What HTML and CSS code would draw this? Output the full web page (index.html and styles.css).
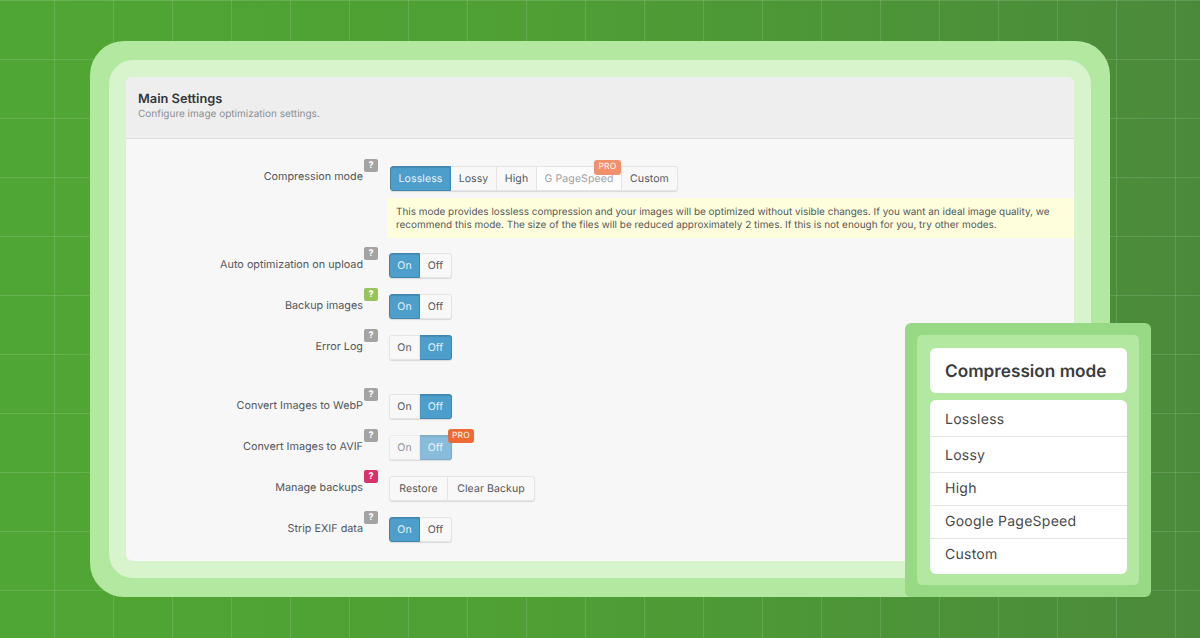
FILE: index.html
```html
<!DOCTYPE html>
<html lang="en">
  <head>
    <meta charset="UTF-8" />
    <meta name="viewport" content="width=device-width, initial-scale=1.0" />
    <title>Main Settings</title>
    <link rel="stylesheet" href="styles.css">
  </head>
  <body>
    <div class="frame-outer">
      <div class="frame-mid">
        <div class="panel">
          <div class="panel-head">
            <h1>Main Settings</h1>
            <p>Configure image optimization settings.</p>
          </div>
          <div class="panel-body">
            <div class="row row-mode">
              <div class="label"><span>Compression mode</span><i class="help">?</i></div>
              <div class="btn-group">
                <span class="btn btn-lossless active">Lossless</span>
                <span class="btn btn-lossy">Lossy</span>
                <span class="btn btn-high">High</span>
                <span class="btn btn-speed disabled">G PageSpeed<b class="pro pro-soft">PRO</b></span>
                <span class="btn btn-custom">Custom</span>
              </div>
            </div>
            <div class="note">This mode provides lossless compression and your images will be optimized without visible changes. If you want an ideal image quality, we recommend this mode. The size of the files will be reduced approximately 2 times. If this is not enough for you, try other modes.</div>

            <div class="row">
              <div class="label"><span>Auto optimization on upload</span><i class="help">?</i></div>
              <div class="btn-group">
                <span class="btn btn-toggle active">On</span>
                <span class="btn btn-toggle">Off</span>
              </div>
            </div>
            <div class="row">
              <div class="label"><span>Backup images</span><i class="help help-green">?</i></div>
              <div class="btn-group">
                <span class="btn btn-toggle active">On</span>
                <span class="btn btn-toggle">Off</span>
              </div>
            </div>
            <div class="row row-spaced">
              <div class="label"><span>Error Log</span><i class="help">?</i></div>
              <div class="btn-group">
                <span class="btn btn-toggle">On</span>
                <span class="btn btn-toggle active">Off</span>
              </div>
            </div>
            <div class="row">
              <div class="label"><span>Convert Images to WebP</span><i class="help">?</i></div>
              <div class="btn-group">
                <span class="btn btn-toggle">On</span>
                <span class="btn btn-toggle active">Off</span>
              </div>
            </div>
            <div class="row">
              <div class="label"><span>Convert Images to AVIF</span><i class="help">?</i></div>
              <div class="btn-group faded">
                <span class="btn btn-toggle">On</span>
                <span class="btn btn-toggle active">Off</span>
                <b class="pro pro-strong">PRO</b>
              </div>
            </div>
            <div class="row">
              <div class="label"><span>Manage backups</span><i class="help help-pink">?</i></div>
              <div class="btn-group">
                <span class="btn btn-restore">Restore</span>
                <span class="btn btn-clear">Clear Backup</span>
              </div>
            </div>
            <div class="row">
              <div class="label"><span>Strip EXIF data</span><i class="help">?</i></div>
              <div class="btn-group">
                <span class="btn btn-toggle active">On</span>
                <span class="btn btn-toggle">Off</span>
              </div>
            </div>
          </div>
        </div>
      </div>
    </div>

    <div class="card">
      <div class="card-inner">
        <div class="card-title">Compression mode</div>
        <ul class="card-list">
          <li class="item-first">Lossless</li>
          <li>Lossy</li>
          <li>High</li>
          <li>Google PageSpeed</li>
          <li>Custom</li>
        </ul>
      </div>
    </div>
  </body>
</html>
```

FILE: styles.css
```css
html,
body {
  height: 638px;
}

body {
  margin: 0;
  overflow: hidden;
  position: relative;
  font-family: Inter, "Liberation Sans", sans-serif;
  text-rendering: geometricPrecision;
  background-color: #4f9e35;
  background-image:
    linear-gradient(90deg, transparent 58px, rgba(255, 255, 255, 0.12) 58px),
    linear-gradient(180deg, transparent 58px, rgba(255, 255, 255, 0.12) 58px),
    linear-gradient(90deg, #50a634 0, #4f9f35 45%, #4b8a3b 100%);
  background-size: 59px 59px, 59px 59px, 100% 100%;
  background-position: -4px 0, 0 1px, 0 0;
}

/* nested frames */
.frame-outer {
  position: absolute;
  left: 90px;
  top: 41px;
  width: 1020px;
  height: 556px;
  box-sizing: border-box;
  padding: 19px;
  background-color: #b2e8a0;
  border-radius: 34px;
}

.frame-mid {
  height: 100%;
  box-sizing: border-box;
  padding: 17px;
  background-color: #d7f4cd;
  border-radius: 24px;
}

.panel {
  height: 100%;
  background-color: #f7f7f7;
  border-radius: 7px;
  overflow: hidden;
}

.panel-head {
  height: 62px;
  box-sizing: border-box;
  padding: 15px 12px 0;
  background-color: #eeeeee;
  border-bottom: 1px solid #dedede;
}

.panel-head h1 {
  margin: 0;
  font-size: 12.8px;
  line-height: 15px;
  font-weight: 600;
  color: #33363b;
}

.panel-head p {
  margin: 0;
  font-size: 10px;
  line-height: 14px;
  color: #8c8e91;
}

.panel-body {
  padding-top: 27px;
}

/* setting rows */
.row {
  display: flex;
  height: 25px;
  margin-bottom: 16px;
}

.row-mode {
  margin-bottom: 7px;
}

.row-spaced {
  margin-bottom: 34px;
}

.label {
  width: 252px;
  flex: none;
  display: flex;
  justify-content: flex-end;
  align-items: flex-start;
  font-size: 10.8px;
  line-height: 23px;
  color: #55585c;
}

.row-mode .label {
  line-height: 21px;
}

.help {
  width: 14px;
  height: 13px;
  margin: -6px 0 0 1px;
  flex: none;
  border-radius: 2px;
  background-color: #a3a3a3;
  color: #fff;
  font-style: normal;
  font-weight: 700;
  font-size: 9px;
  line-height: 13px;
  text-align: center;
}

.row-mode .help {
  margin-top: -7px;
}

.help-green {
  background-color: #99c45c;
}

.help-pink {
  background-color: #d9316a;
}

/* buttons */
.btn-group {
  position: relative;
  display: flex;
  height: 25px;
  margin-left: 11px;
  border-radius: 3px;
  box-shadow: 0 1px 1px rgba(0, 0, 0, 0.12);
}

.row-mode .btn-group {
  margin-left: 12px;
}

.btn {
  position: relative;
  box-sizing: border-box;
  height: 25px;
  background-color: #f8f8f8;
  border: 1px solid #e4e4e4;
  border-left-width: 0;
  font-size: 10.5px;
  line-height: 24px;
  letter-spacing: 0.1px;
  text-align: center;
  color: #55585c;
}

.btn:first-child {
  border-left-width: 1px;
  border-radius: 3px 0 0 3px;
}

.btn:last-of-type {
  border-radius: 0 3px 3px 0;
}

.btn.active {
  background-color: #4d9ecb;
  border-color: #3f86b0;
  color: #e6f3fb;
  box-shadow: inset 0 1px 1px rgba(0, 0, 0, 0.12);
}

.btn.disabled {
  background-color: #fcfcfc;
  color: #a3a3a3;
}

.btn-lossless { width: 61px; }
.btn-lossy { width: 46px; }
.btn-high { width: 40px; }
.btn-speed { width: 85px; }
.btn-custom { width: 56px; }
.btn-toggle { width: 31px; }
.btn-toggle + .btn-toggle { width: 32px; }
.btn-restore { width: 59px; }
.btn-clear { width: 87px; }

.faded .btn {
  opacity: 0.65;
}

.pro {
  position: absolute;
  height: 15px;
  border-radius: 3px;
  font-size: 8.5px;
  font-weight: 500;
  line-height: 15px;
  letter-spacing: 0.2px;
  text-align: center;
  color: #fde9df;
}

.pro-soft {
  right: 0;
  top: -7px;
  width: 27px;
  background-color: #f0906c;
}

.pro-strong {
  left: 59px;
  top: -6px;
  width: 26px;
  height: 14px;
  line-height: 14px;
  background-color: #ee6a33;
}

.note {
  height: 40px;
  box-sizing: border-box;
  margin: 0 0 15px 261px;
  padding: 8px 8px 0 9px;
  background-color: #fefedd;
  font-size: 9.95px;
  line-height: 13px;
  color: #56585a;
}

/* overlay card */
.card {
  position: absolute;
  left: 905px;
  top: 323px;
  width: 246px;
  height: 274px;
  box-sizing: border-box;
  padding: 12px;
  background-color: #98d985;
  border-radius: 6px;
}

.card-inner {
  height: 250px;
  box-sizing: border-box;
  padding: 13px 12px 11px 13px;
  background-color: #b2e8a0;
  border-radius: 5px;
}

.card-title {
  height: 45px;
  box-sizing: border-box;
  padding-left: 15px;
  background-color: #fff;
  border-radius: 6px;
  font-size: 17.2px;
  font-weight: 600;
  line-height: 47px;
  color: #3a3c3f;
}

.card-list {
  margin: 7px 0 0;
  padding: 0;
  list-style: none;
  background-color: #fff;
  border-radius: 6px;
}

.card-list li {
  height: 33px;
  box-sizing: border-box;
  padding-left: 15px;
  border-bottom: 1px solid #e4e4e4;
  font-size: 14px;
  line-height: 31px;
  letter-spacing: 0.25px;
  color: #47494c;
}

.card-list .item-first {
  height: 37px;
  line-height: 40px;
}

.card-list li:nth-child(2) {
  height: 36px;
  line-height: 38px;
}

.card-list li:last-child {
  height: 35px;
  border-bottom: 0;
}
```
